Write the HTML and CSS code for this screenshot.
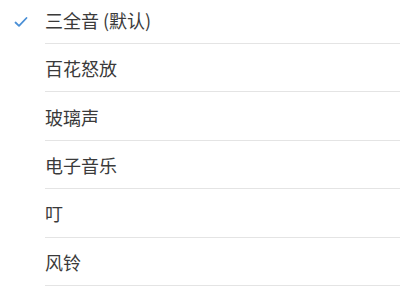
FILE: index.html
```html
<!DOCTYPE html>
<html lang="zh-CN">
<head>
<meta charset="utf-8">
<link rel="stylesheet" href="styles.css">
</head>
<body>
<ul class="list">
  <li class="item selected">
    <span class="check"><svg width="14" height="12" viewBox="0 0 14 12"><path d="M1.5 6.5 L5 9.8 L12.5 2" fill="none" stroke="#4a8fd6" stroke-width="1.8" stroke-linecap="round" stroke-linejoin="round"/></svg></span>
    <span class="label">三全音 (默认)</span>
  </li>
  <li class="item"><span class="check"></span><span class="label">百花怒放</span></li>
  <li class="item"><span class="check"></span><span class="label">玻璃声</span></li>
  <li class="item"><span class="check"></span><span class="label">电子音乐</span></li>
  <li class="item"><span class="check"></span><span class="label">叮</span></li>
  <li class="item"><span class="check"></span><span class="label">风铃</span></li>
  <li class="item faded"><span class="check"></span><span class="label">钟声</span></li>
</ul>
</body>
</html>
```
FILE: styles.css
```css
html, body {
  margin: 0;
  padding: 0;
  background: #ffffff;
  overflow: hidden;
}
.list {
  list-style: none;
  margin: -4.4px 0 0 0;
  padding: 0;
  font-family: "Noto Sans CJK SC", "Noto Sans", sans-serif;
}
.item {
  display: flex;
  align-items: stretch;
  height: 48.4px;
}
.check {
  width: 45px;
  flex: 0 0 45px;
  display: flex;
  align-items: center;
  justify-content: flex-start;
  padding-left: 13.5px;
  padding-top: 4px;
  box-sizing: border-box;
}
.label {
  flex: 1;
  display: flex;
  align-items: center;
  font-size: 18px;
  color: #3a3a3a;
  border-bottom: 1px solid #e4e4e4;
  box-sizing: border-box;
  padding-top: 1px;
}
.faded .label {
  color: #d8d8d8;
}
```
